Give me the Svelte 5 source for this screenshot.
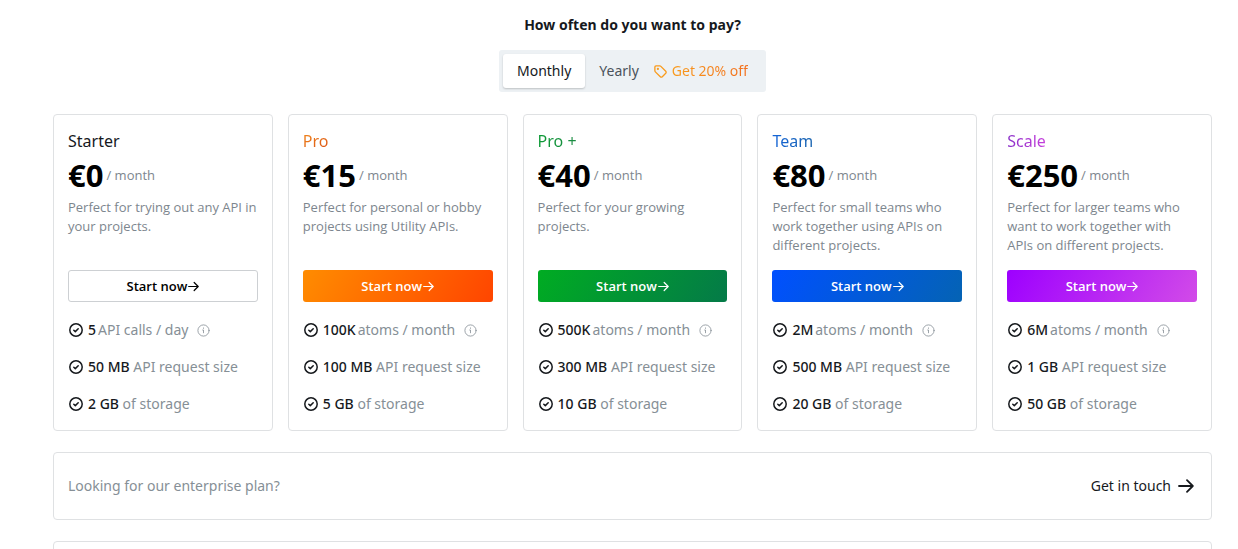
<script>
  const plans = [
    {
      id: "starter",
      name: "Starter",
      price: 0,
      description: "Perfect for trying out any API in your projects.",
      amount: "5",
      unit: "API calls / day",
      requestSize: "50 MB",
      storage: "2 GB",
    },
    {
      id: "pro",
      name: "Pro",
      price: 15,
      description: "Perfect for personal or hobby projects using Utility APIs.",
      amount: "100K",
      unit: "atoms / month",
      requestSize: "100 MB",
      storage: "5 GB",
    },
    {
      id: "pro-plus",
      name: "Pro +",
      price: 40,
      description: "Perfect for your growing projects.",
      amount: "500K",
      unit: "atoms / month",
      requestSize: "300 MB",
      storage: "10 GB",
    },
    {
      id: "team",
      name: "Team",
      price: 80,
      description:
        "Perfect for small teams who work together using APIs on different projects.",
      amount: "2M",
      unit: "atoms / month",
      requestSize: "500 MB",
      storage: "20 GB",
    },
    {
      id: "scale",
      name: "Scale",
      price: 250,
      description:
        "Perfect for larger teams who want to work together with APIs on different projects.",
      amount: "6M",
      unit: "atoms / month",
      requestSize: "1 GB",
      storage: "50 GB",
    },
  ];

  let period = $state("monthly");
</script>

{#snippet check()}
  <svg class="check" viewBox="0 0 16 16" aria-hidden="true">
    <circle cx="8" cy="8" r="6.2" />
    <path d="M5.8 8.2l1.5 1.4 2.9-2.9" />
  </svg>
{/snippet}

{#snippet arrow()}
  <svg class="arrow" viewBox="0 0 16 16" aria-hidden="true">
    <path d="M1 8h13.5M9 2.2L14.8 8 9 13.8" />
  </svg>
{/snippet}

<main>
  <h2>How often do you want to pay?</h2>
  <div class="toggle">
    <button
      class:active={period === "monthly"}
      aria-pressed={period === "monthly"}
      onclick={() => (period = "monthly")}>Monthly</button
    >
    <button
      class:active={period === "yearly"}
      aria-pressed={period === "yearly"}
      onclick={() => (period = "yearly")}
    >
      Yearly
      <span class="offer">
        <svg viewBox="0 0 16 16" aria-hidden="true">
          <path
            d="M2 3.2v4.1c0 .4.2.8.5 1.1l5.3 5.2c.6.6 1.5.6 2.1 0l3.7-3.7c.6-.6.6-1.5 0-2.1L8.4 2.5C8.1 2.2 7.7 2 7.3 2H3.2C2.5 2 2 2.5 2 3.2z"
          />
          <circle cx="5.2" cy="5.2" r=".5" />
        </svg>
        <span>Get 20% off</span>
      </span>
    </button>
  </div>

  <div class="plans">
    {#each plans as plan}
      <section class="card {plan.id}">
        <h3><span>{plan.name}</span></h3>
        <div class="price">
          <strong>€{plan.price}</strong>
          <span>/ month</span>
        </div>
        <p>{plan.description}</p>
        <button class="start">Start now{@render arrow()}</button>
        <ul>
          <li>
            {@render check()}
            <span class="usage"><b>{plan.amount}</b><span>{plan.unit}</span></span>
            <svg class="info" viewBox="0 0 16 16" aria-hidden="true">
              <circle cx="8" cy="8" r="6.9" />
              <path d="M7 7.4h1v3.4M8 4.8v.6" />
            </svg>
          </li>
          <li>{@render check()}<span><b>{plan.requestSize}</b> API request size</span></li>
          <li>{@render check()}<span><b>{plan.storage}</b> of storage</span></li>
        </ul>
      </section>
    {/each}
  </div>

  <div class="banner">
    <span>Looking for our enterprise plan?</span>
    <a href="#contact">Get in touch{@render arrow()}</a>
  </div>
  <div class="banner"></div>
</main>

<style>
  :global(body) {
    margin: 0;
    background: #fff;
    overflow: hidden;
  }
  main {
    display: flex;
    flex-direction: column;
    padding: 14px 26px 0 53px;
    font-family: "Noto Sans", sans-serif;
    font-size: 14px;
    line-height: 22px;
    color: #16191d;
  }
  h2,
  h3,
  p,
  ul {
    margin: 0;
    padding: 0;
  }
  h2 {
    font-size: 14px;
    font-weight: 700;
    text-align: center;
  }
  button {
    font: inherit;
    cursor: pointer;
  }
  svg {
    flex: none;
    fill: none;
    stroke: currentColor;
    stroke-linecap: round;
    stroke-linejoin: round;
  }
  .toggle {
    align-self: center;
    display: flex;
    margin: 14px 0 22px;
    padding: 4px;
    background: #edf1f4;
    border-radius: 3px;
  }
  .toggle button {
    display: flex;
    align-items: center;
    gap: 14px;
    height: 34px;
    padding: 0 14px;
    border: 0;
    border-radius: 3px;
    background: none;
    color: #4b535b;
  }
  .toggle button.active {
    background: #fff;
    color: #16191d;
    box-shadow: 0 1px 2px rgba(0, 0, 0, 0.2);
  }
  .offer {
    display: flex;
    align-items: center;
    gap: 4px;
    color: #f99b1c;
  }
  .offer svg {
    width: 15px;
    height: 15px;
    stroke-width: 1.4;
  }
  .offer span {
    background: linear-gradient(90deg, #f99b1c, #f26f1d);
    background-clip: text;
    color: transparent;
  }
  .plans {
    display: grid;
    grid-template-columns: repeat(5, minmax(0, 1fr));
    gap: 15px;
  }
  .card {
    --accent: #16191d;
    display: flex;
    flex-direction: column;
    padding: 14px 14px 15px;
    border: 1px solid #dfe1e3;
    border-radius: 4px;
  }
  .pro {
    --accent: linear-gradient(150deg, #f28a1c, #d94f14);
    --fill: linear-gradient(120deg, #ff8c00, #ff4500);
  }
  .pro-plus {
    --accent: linear-gradient(90deg, #0c9a35, #1a8a42);
    --fill: linear-gradient(120deg, #00ac22, #047a48);
  }
  .team {
    --accent: linear-gradient(90deg, #1565d8, #1762ae);
    --fill: linear-gradient(120deg, #0050ff, #0463b4);
  }
  .scale {
    --accent: linear-gradient(90deg, #8a2fc8, #c640dc);
    --fill: linear-gradient(120deg, #9d00ff, #d24be8);
  }
  h3 {
    font-size: 16px;
    font-weight: 400;
    line-height: 24px;
  }
  .card:not(.starter) h3 span {
    background: var(--accent);
    background-clip: text;
    color: transparent;
  }
  .price,
  p,
  .start {
    font-family: "Open Sans", "Noto Sans", sans-serif;
    font-size: 13px;
  }
  .price {
    display: flex;
    align-items: center;
    gap: 3px;
    height: 44px;
    margin-bottom: 1px;
    color: #7d868e;
  }
  .price strong {
    font-size: 31px;
    color: #000;
  }
  p {
    min-height: 57px;
    line-height: 19px;
    color: #7d868e;
  }
  .start {
    display: flex;
    align-items: center;
    justify-content: center;
    gap: 1px;
    height: 32px;
    margin: 15px 0 17px;
    padding: 0;
    border: 0;
    border-radius: 3px;
    background: var(--fill);
    font-weight: 600;
    line-height: 19px;
    color: #fff;
  }
  .starter .start {
    border: 1px solid #cdd0d3;
    background: #fff;
    color: #000;
  }
  .arrow {
    width: 11px;
    height: 11px;
    stroke-width: 1.8;
  }
  ul {
    display: grid;
    gap: 15px;
    list-style: none;
    color: #868f96;
  }
  li {
    display: flex;
    align-items: center;
    gap: 4px;
    white-space: nowrap;
  }
  li b {
    font-weight: 500;
    color: #16191d;
  }
  .usage {
    display: flex;
    gap: 2px;
  }
  .check {
    width: 16px;
    height: 16px;
    color: #16191d;
    stroke-width: 1.5;
  }
  .info {
    width: 13px;
    height: 13px;
    margin-left: 5px;
  }
  .banner {
    display: flex;
    align-items: center;
    justify-content: space-between;
    min-height: 66px;
    margin-top: 21px;
    padding: 0 17px 0 14px;
    border: 1px solid #dfe1e3;
    border-radius: 4px;
    color: #868f96;
  }
  .banner a {
    display: flex;
    align-items: center;
    gap: 7px;
    color: #16191d;
    text-decoration: none;
  }
  .banner .arrow {
    width: 16px;
    height: 16px;
  }
</style>
